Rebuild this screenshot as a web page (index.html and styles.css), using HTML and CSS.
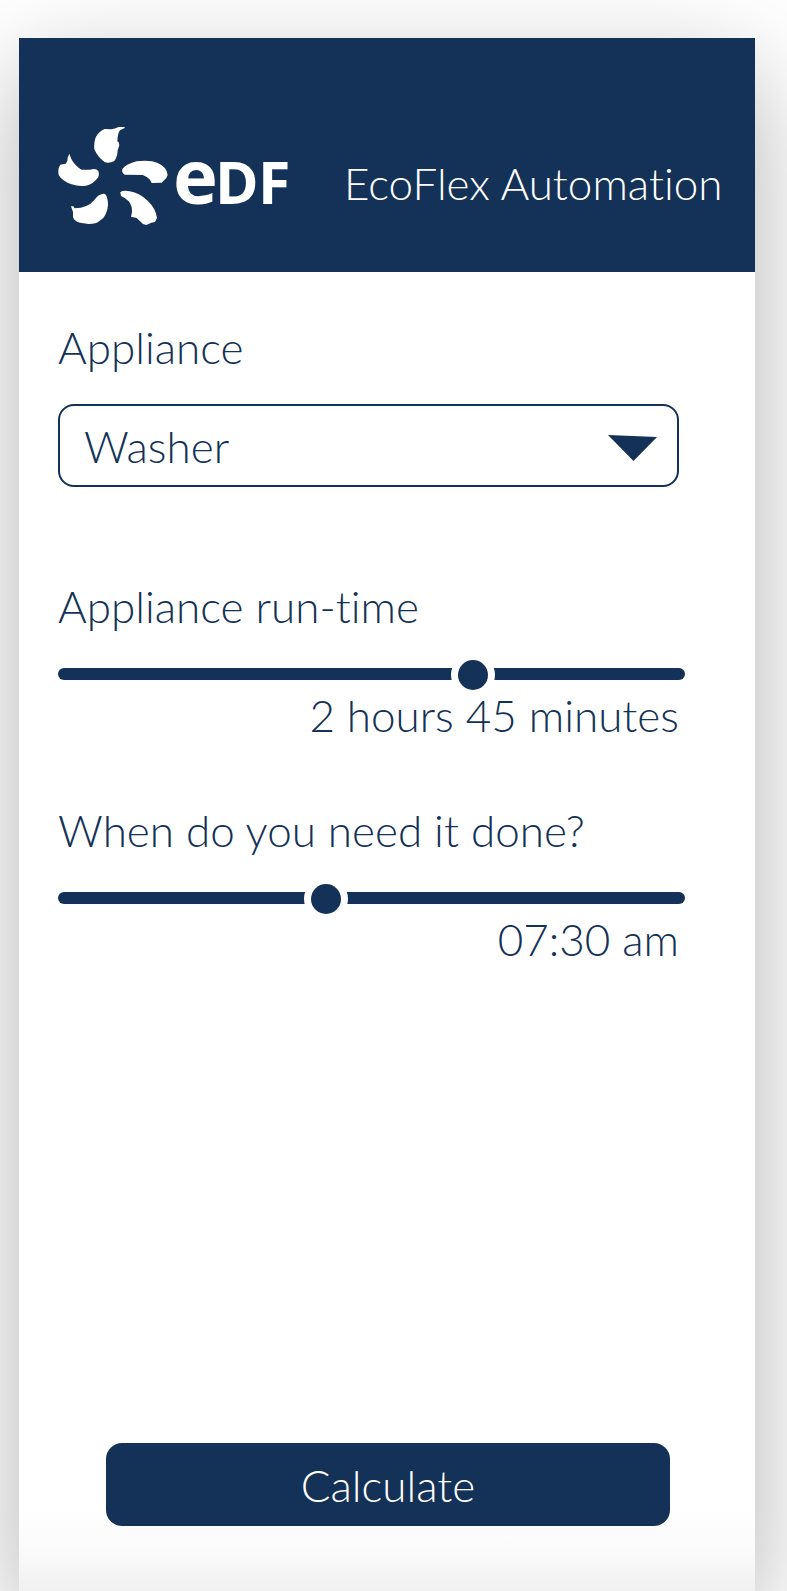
FILE: index.html
```html
<!DOCTYPE html>
<html lang="en">
<head>
    <meta charset="UTF-8">
    <meta name="viewport" content="width=device-width, initial-scale=1.0">
    <title>EcoFlex Automation</title>
    <link rel="stylesheet" href="styles.css">
</head>
<body>
    <div class="card">
        <header class="header">
            <svg class="logo" viewBox="0 0 250 126" role="img" aria-label="EDF">
                <!-- Petals -->
                <g transform="scale(0.3333)">
                    <path d="M224 21 L206 21 Q194 26 184 28 L164 27 Q148 33 138 50 Q131 65 133 88 Q144 113 165 127 Q179 131 193 123 Q203 110 203 91 L208 76 L206 67 L202 64 Q203 39 210 31 L224 24 Z"/>
                    <path d="M58 101 L64 117 Q75 138 95 149 L120 149 Q138 143 145 153 Q150 168 141 176 Q128 193 108 197 Q85 200 65 193 Q37 184 26 165 Q22 147 31 134 L47 131 Q54 123 53 113 Z"/>
                    <path d="M217 148 Q226 133 259 124 Q300 119 323 129 Q351 141 353 165 Q350 176 343 180 L335 188 L305 189 L300 179 Q292 170 278 165 L224 164 Q214 158 217 148 Z"/>
                    <path d="M211 217 Q218 210 239 214 Q270 220 293 242 Q318 266 321 294 L315 306 L304 308 L289 315 L279 312 L260 294 L243 290 L246 277 Q247 256 236 244 Q228 234 213 228 Z"/>
                    <path d="M63 259 L70 259 L74 265 Q113 264 133 240 Q147 220 163 221 Q174 226 174 255 Q172 278 160 294 L149 302 Q139 312 116 312 L95 309 Q79 307 72 298 L69 291 L69 276 Z"/>
                </g>
                <text class="logo-text" y="84"><tspan class="logo-e" x="123">e</tspan><tspan x="165">D</tspan><tspan x="208">F</tspan></text>
            </svg>
            <h1 class="title">EcoFlex Automation</h1>
        </header>

        <form class="form">
            <div class="field">
                <label for="appliance">Appliance</label>
                <div class="select-wrap">
                    <select id="appliance" class="select">
                        <option>Washer</option>
                    </select>
                    <svg class="arrow" viewBox="0 0 49 26" aria-hidden="true">
                        <path d="M0 0 L49 2 L25.500 26 Z"/>
                    </svg>
                </div>
            </div>

            <div class="field">
                <label for="runtime">Appliance run-time</label>
                <input id="runtime" class="slider" type="range" min="0" max="246" value="165">
                <output class="value" for="runtime">2 hours 45 minutes</output>
            </div>

            <div class="field">
                <label for="done">When do you need it done?</label>
                <input id="done" class="slider" type="range" min="10" max="1050" value="450">
                <output class="value" for="done">07:30 am</output>
            </div>

            <button type="button" class="calculate">Calculate</button>
        </form>
    </div>
</body>
</html>
```
FILE: styles.css
```css
:root {
    --navy: #143257;
    --white: #ffffff;
}

* {
    margin: 0;
    padding: 0;
    box-sizing: border-box;
}

body {
    min-height: 100vh;
    display: flex;
    flex-direction: column;
    padding: 38px 32px 0 19px;
    background: var(--white);
    color: var(--navy);
    font-family: Lato, sans-serif;
    font-size: 44px;
    font-weight: 300;
    font-variant-ligatures: none;
    line-height: 54px;
    overflow-x: hidden;
}

.card {
    flex: 1;
    display: flex;
    flex-direction: column;
    background: linear-gradient(to top, #f0f0f0, #fafafa 36px, #ffffff 84px);
    box-shadow: 0 35px 100px rgba(0, 0, 0, 0.3);
}

/* Header */
.header {
    display: flex;
    align-items: center;
    gap: 44px;
    padding: 82px 0 26px 31px;
    background: var(--navy);
    color: var(--white);
}

.logo {
    width: 250px;
    height: 126px;
    flex-shrink: 0;
    fill: var(--white);
}

.logo-text {
    font-family: "Open Sans", sans-serif;
    font-size: 59px;
    font-weight: 700;
}

.logo-e {
    font-size: 76px;
}

.title {
    font-size: inherit;
    font-weight: inherit;
    white-space: nowrap;
}

/* Form */
.form {
    flex: 1;
    display: flex;
    flex-direction: column;
    padding: 48px 70px 65px 39px;
}

.field {
    display: flex;
    flex-direction: column;
    margin-bottom: 62px;
}

.field:first-child {
    margin-bottom: 92px;
}

.select-wrap {
    display: grid;
    align-items: center;
    margin: 30px 6px 0 0;
}

.select {
    grid-area: 1 / 1;
    width: 100%;
    height: 83px;
    padding: 0 80px 0 24px;
    appearance: none;
    border: 2px solid var(--navy);
    border-radius: 16px;
    background: none;
    color: inherit;
    font: inherit;
}

.arrow {
    grid-area: 1 / 1;
    justify-self: end;
    width: 49px;
    height: 26px;
    margin: 4px 22px 0 0;
    fill: var(--navy);
    pointer-events: none;
}

.slider {
    width: 100%;
    height: 30px;
    margin-top: 26px;
    appearance: none;
    background: none;
}

.slider::-webkit-slider-runnable-track {
    height: 12px;
    border-radius: 6px;
    background: var(--navy);
}

.slider::-webkit-slider-thumb {
    appearance: none;
    width: 30px;
    height: 30px;
    margin-top: -8px;
    border-radius: 50%;
    background: var(--navy);
    box-shadow: 0 0 0 7px var(--white);
}

.value {
    margin-right: 6px;
    line-height: 52px;
    text-align: right;
}

.calculate {
    height: 83px;
    margin: auto 15px 0 48px;
    border: 0;
    border-radius: 16px;
    background: var(--navy);
    color: var(--white);
    font: inherit;
}
```
